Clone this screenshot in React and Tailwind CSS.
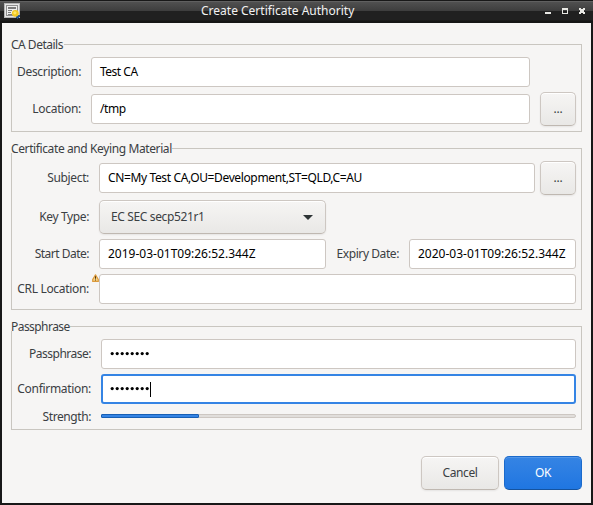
import React from "react";

function Group({ title, titleClass, className, children }) {
  return (
    <section className={`relative flex flex-col border border-[#c9c6c0] px-[5px] pt-[12px] ${className}`}>
      <h2 className={`absolute -left-px -top-[8px] h-[12px] bg-[#f6f5f4] leading-[16px] whitespace-nowrap ${titleClass}`}>
        {title}
      </h2>
      {children}
    </section>
  );
}

function Label({ className, children }) {
  return <label className={`shrink-0 text-right whitespace-nowrap leading-[16px] ${className}`}>{children}</label>;
}

function Field({ className = "", children }) {
  return (
    <div className={`flex h-[30px] items-center rounded-[3px] border border-[#cdc7c2] bg-white px-[8px] whitespace-nowrap text-black ${className}`}>
      {children}
    </div>
  );
}

const buttonBase =
  "flex h-[34px] shrink-0 items-center rounded-[5px] border border-[#cdc7c2] border-b-[#bfb8b1] bg-linear-to-t from-[#e9e8e6] to-[#f6f5f4] shadow-[inset_0_1px_#ffffff,0_1px_2px_rgba(0,0,0,0.07)]";

function BrowseButton() {
  return <button className={`${buttonBase} w-[36px] justify-center tracking-[-0.2px]`}>...</button>;
}

function Dots() {
  return (
    <span className="flex gap-px">
      {Array.from({ length: 8 }, (_, i) => (
        <svg key={i} width="4" height="4" viewBox="0 0 4 4">
          <circle cx="2.2" cy="1.6" r="1.6" fill="#000" />
        </svg>
      ))}
    </span>
  );
}

function CertificateIcon() {
  return (
    <svg width="16" height="16" viewBox="0 0 16 16" shapeRendering="crispEdges">
      <path d="M0 0h16v15H0z" fill="#b5b5b5" />
      <path d="M1 1h14v13H1z" fill="#e6e6e6" />
      <path d="M2 2h12v11H2z" fill="#8f8f8f" />
      <path d="M3 3h10v9H3z" fill="#eeeeee" />
      <path d="M4 4h8v2H4zM4 7h4v1H4zM4 9h3v1H4zM4 11h4v1H4z" fill="#7c7c7c" />
      <path d="M12 12h4v2h-1v1h-1v1h-1v-1h-1z" fill="#24548f" />
      <g shapeRendering="auto">
        <circle cx="11.3" cy="10.3" r="3.4" fill="#f2c81f" />
        <circle cx="10.9" cy="9.8" r="1.6" fill="#ffe768" />
      </g>
    </svg>
  );
}

function WarningIcon() {
  return (
    <svg className="absolute -left-[7px] top-0" width="7" height="8" viewBox="0 0 7 8">
      <path d="M3.5 .8 6.3 5.6V7.4H.7V5.6Z" fill="#f9d586" stroke="#dc9a3c" strokeWidth="1.2" strokeLinejoin="round" />
      <path d="M3 2.2h1v2.6H3zM3 5.5h1v1H3z" fill="#4d3512" />
    </svg>
  );
}

export default function App() {
  return (
    <div className="flex h-[505px] w-[593px] flex-col overflow-hidden bg-[#181818] font-['Noto_Sans','Open_Sans',sans-serif] text-[12px] text-[#3b4043]">
      <header className="flex h-[23px] shrink-0 items-start border-t border-[#181818] bg-[linear-gradient(#707070_0px,#505050_1px,#3d3d3d_10px,#202020_10px,#202020_19px,#151515_20px)] px-[4px]">
        <div className="w-[97px] pt-[2px]">
          <CertificateIcon />
        </div>
        <h1 className="flex-1 pl-[100px] pt-px leading-[17px] text-[#f2f2f2]">Create Certificate Authority</h1>
        <div className="flex w-[45px] pl-px pt-[7px]">
          <svg width="41" height="7" viewBox="0 0 41 7" shapeRendering="crispEdges" fill="#e8e8e4">
            <path d="M0 4h6v2H0z" />
            <path fillRule="evenodd" d="M17 0h6v6h-6zM18 2h4v3h-4z" />
            <path d="M34 0h2v1h2V0h2v2h-1v2h1v2h-2V5h-2v1h-2V4h1V2h-1z" />
          </svg>
        </div>
      </header>

      <main className="mx-[2px] mb-[2px] flex h-[480px] flex-col bg-[#f6f5f4] px-[9px] pt-[21px]">
        <Group title="CA Details" titleClass="w-[53px] tracking-[-0.5px]" className="h-[88px]">
          <div className="flex items-center">
            <Label className="w-[64px] tracking-[-0.31px]">Description:</Label>
            <Field className="ml-[10px] w-[439px] tracking-[-0.5px]">Test CA</Field>
          </div>
          <div className="mt-[5px] flex items-center">
            <Label className="w-[64px] tracking-[-0.3px]">Location:</Label>
            <Field className="ml-[10px] w-[439px] tracking-[-0.4px]">/tmp</Field>
            <div className="ml-[10px]">
              <BrowseButton />
            </div>
          </div>
        </Group>

        <Group title="Certificate and Keying Material" titleClass="w-[161px] tracking-[-0.39px]" className="mt-[16px] h-[162px]">
          <div className="flex items-center">
            <Label className="w-[72px] tracking-[-0.35px]">Subject:</Label>
            <Field className="ml-[10px] w-[436px] tracking-[-0.37px]">CN=My Test CA,OU=Development,ST=QLD,C=AU</Field>
            <div className="ml-[5px]">
              <BrowseButton />
            </div>
          </div>
          <div className="mt-[5px] flex items-center">
            <Label className="w-[72px] tracking-[-0.38px]">Key Type:</Label>
            <button className={`${buttonBase} ml-[10px] w-[227px] justify-between pl-[11px] pr-[12px]`}>
              <span className="tracking-[-0.37px]">EC SEC secp521r1</span>
              <svg width="10" height="5" viewBox="0 0 10 5">
                <path d="M0 0h10L5 5z" fill="#2e3436" />
              </svg>
            </button>
          </div>
          <div className="mt-[5px] flex items-center">
            <Label className="w-[72px] tracking-[-0.5px]">Start Date:</Label>
            <Field className="ml-[10px] w-[227px]">2019-03-01T09:26:52.344Z</Field>
            <Label className="ml-[10px] w-[63px] tracking-[-0.42px]">Expiry Date:</Label>
            <Field className="ml-[10px] w-[167px]">2020-03-01T09:26:52.344Z</Field>
          </div>
          <div className="mt-[5px] flex items-center">
            <Label className="w-[72px] tracking-[-0.31px]">CRL Location:</Label>
            <div className="relative ml-[10px] w-[477px]">
              <Field />
              <WarningIcon />
            </div>
          </div>
        </Group>

        <Group title="Passphrase" titleClass="w-[59px] tracking-[-0.55px]" className="mt-[16px] h-[104px]">
          <div className="flex items-center">
            <Label className="w-[74px] tracking-[-0.5px]">Passphrase:</Label>
            <Field className="ml-[10px] w-[475px]">
              <Dots />
            </Field>
          </div>
          <div className="mt-[5px] flex items-center">
            <Label className="w-[74px] tracking-[-0.31px]">Confirmation:</Label>
            <div className="ml-[10px] flex h-[30px] w-[475px] items-center rounded-[3px] border-2 border-[#3584e4] bg-white px-[7px]">
              <Dots />
              <span className="ml-px h-[15px] w-px bg-black" />
            </div>
          </div>
          <div className="mt-[5px] flex items-start">
            <Label className="w-[74px] tracking-[-0.42px]">Strength:</Label>
            <div className="ml-[10px] mt-[5px] flex h-[4px] w-[475px] rounded-[2px] border border-[#cdc7c2] bg-[#e1dedb]">
              <div className="-my-px -ml-px h-[4px] w-[98px] rounded-[1px] border border-[#185fb4] bg-[#3584e4]" />
            </div>
          </div>
        </Group>

        <footer className="mt-[26px] flex justify-end gap-[5px]">
          <button className={`${buttonBase} w-[78px] justify-center tracking-[-0.4px]`}>Cancel</button>
          <button className="flex h-[34px] w-[78px] items-center justify-center rounded-[5px] border border-[#1b6acb] border-b-[#15539e] bg-linear-to-t from-[#1f76e1] to-[#3584e4] tracking-[-0.5px] text-white shadow-[inset_0_1px_#5396e8]">
            OK
          </button>
        </footer>
      </main>
    </div>
  );
}
